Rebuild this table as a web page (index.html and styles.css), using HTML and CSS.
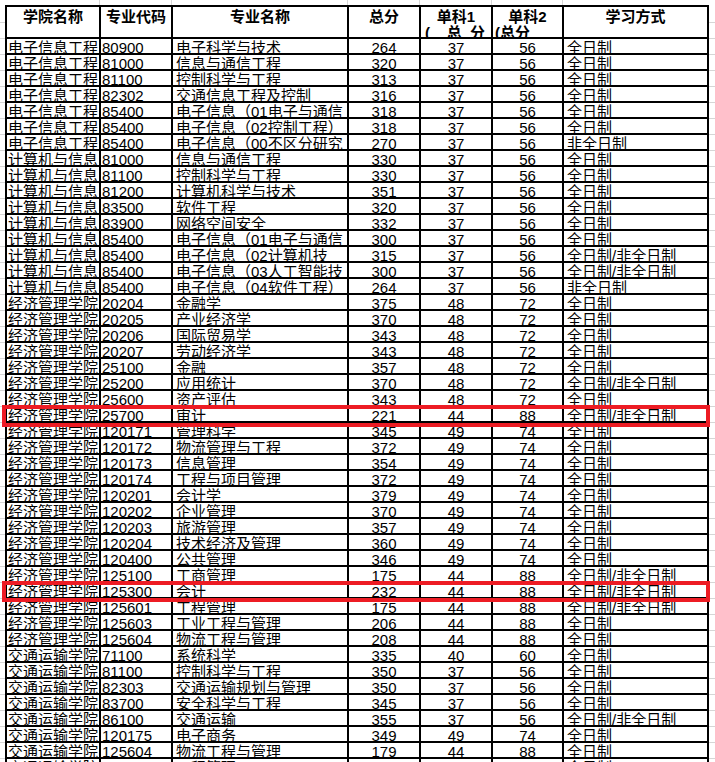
FILE: index.html
```html
<!DOCTYPE html>
<html lang="zh-CN">
<head>
<meta charset="utf-8">
<title>录取分数线</title>
<link rel="stylesheet" href="styles.css">
</head>
<body>
<div class="page">
  <div class="sheet">
    <div class="row head">
      <div class="c">学院名称</div>
      <div class="c">专业代码</div>
      <div class="c">专业名称</div>
      <div class="c">总分</div>
      <div class="c"><div>单科1</div><div class="l2 a">(&nbsp;&nbsp;&nbsp;&nbsp;总&nbsp;&nbsp;分</div></div>
      <div class="c"><div>单科2</div><div class="l2 b">(总分</div></div>
      <div class="c">学习方式</div>
    </div>
    <div class="row"><div class="c">电子信息工程</div><div class="c">80900</div><div class="c">电子科学与技术</div><div class="c">264</div><div class="c">37</div><div class="c">56</div><div class="c">全日制</div></div>
    <div class="row"><div class="c">电子信息工程</div><div class="c">81000</div><div class="c">信息与通信工程</div><div class="c">320</div><div class="c">37</div><div class="c">56</div><div class="c">全日制</div></div>
    <div class="row"><div class="c">电子信息工程</div><div class="c">81100</div><div class="c">控制科学与工程</div><div class="c">313</div><div class="c">37</div><div class="c">56</div><div class="c">全日制</div></div>
    <div class="row"><div class="c">电子信息工程</div><div class="c">82302</div><div class="c">交通信息工程及控制</div><div class="c">316</div><div class="c">37</div><div class="c">56</div><div class="c">全日制</div></div>
    <div class="row"><div class="c">电子信息工程</div><div class="c">85400</div><div class="c">电子信息（01电子与通信</div><div class="c">318</div><div class="c">37</div><div class="c">56</div><div class="c">全日制</div></div>
    <div class="row"><div class="c">电子信息工程</div><div class="c">85400</div><div class="c">电子信息（02控制工程）</div><div class="c">318</div><div class="c">37</div><div class="c">56</div><div class="c">全日制</div></div>
    <div class="row"><div class="c">电子信息工程</div><div class="c">85400</div><div class="c">电子信息（00不区分研究</div><div class="c">270</div><div class="c">37</div><div class="c">56</div><div class="c">非全日制</div></div>
    <div class="row"><div class="c">计算机与信息</div><div class="c">81000</div><div class="c">信息与通信工程</div><div class="c">330</div><div class="c">37</div><div class="c">56</div><div class="c">全日制</div></div>
    <div class="row"><div class="c">计算机与信息</div><div class="c">81100</div><div class="c">控制科学与工程</div><div class="c">330</div><div class="c">37</div><div class="c">56</div><div class="c">全日制</div></div>
    <div class="row"><div class="c">计算机与信息</div><div class="c">81200</div><div class="c">计算机科学与技术</div><div class="c">351</div><div class="c">37</div><div class="c">56</div><div class="c">全日制</div></div>
    <div class="row"><div class="c">计算机与信息</div><div class="c">83500</div><div class="c">软件工程</div><div class="c">320</div><div class="c">37</div><div class="c">56</div><div class="c">全日制</div></div>
    <div class="row"><div class="c">计算机与信息</div><div class="c">83900</div><div class="c">网络空间安全</div><div class="c">332</div><div class="c">37</div><div class="c">56</div><div class="c">全日制</div></div>
    <div class="row"><div class="c">计算机与信息</div><div class="c">85400</div><div class="c">电子信息（01电子与通信</div><div class="c">300</div><div class="c">37</div><div class="c">56</div><div class="c">全日制</div></div>
    <div class="row"><div class="c">计算机与信息</div><div class="c">85400</div><div class="c">电子信息（02计算机技</div><div class="c">315</div><div class="c">37</div><div class="c">56</div><div class="c">全日制/非全日制</div></div>
    <div class="row"><div class="c">计算机与信息</div><div class="c">85400</div><div class="c">电子信息（03人工智能技</div><div class="c">300</div><div class="c">37</div><div class="c">56</div><div class="c">全日制/非全日制</div></div>
    <div class="row"><div class="c">计算机与信息</div><div class="c">85400</div><div class="c">电子信息（04软件工程）</div><div class="c">264</div><div class="c">37</div><div class="c">56</div><div class="c">非全日制</div></div>
    <div class="row"><div class="c">经济管理学院</div><div class="c">20204</div><div class="c">金融学</div><div class="c">375</div><div class="c">48</div><div class="c">72</div><div class="c">全日制</div></div>
    <div class="row"><div class="c">经济管理学院</div><div class="c">20205</div><div class="c">产业经济学</div><div class="c">370</div><div class="c">48</div><div class="c">72</div><div class="c">全日制</div></div>
    <div class="row"><div class="c">经济管理学院</div><div class="c">20206</div><div class="c">国际贸易学</div><div class="c">343</div><div class="c">48</div><div class="c">72</div><div class="c">全日制</div></div>
    <div class="row"><div class="c">经济管理学院</div><div class="c">20207</div><div class="c">劳动经济学</div><div class="c">343</div><div class="c">48</div><div class="c">72</div><div class="c">全日制</div></div>
    <div class="row"><div class="c">经济管理学院</div><div class="c">25100</div><div class="c">金融</div><div class="c">357</div><div class="c">48</div><div class="c">72</div><div class="c">全日制</div></div>
    <div class="row"><div class="c">经济管理学院</div><div class="c">25200</div><div class="c">应用统计</div><div class="c">370</div><div class="c">48</div><div class="c">72</div><div class="c">全日制/非全日制</div></div>
    <div class="row"><div class="c">经济管理学院</div><div class="c">25600</div><div class="c">资产评估</div><div class="c">343</div><div class="c">48</div><div class="c">72</div><div class="c">全日制</div></div>
    <div class="row"><div class="c">经济管理学院</div><div class="c">25700</div><div class="c">审计</div><div class="c">221</div><div class="c">44</div><div class="c">88</div><div class="c">全日制/非全日制</div></div>
    <div class="row"><div class="c">经济管理学院</div><div class="c">120171</div><div class="c">管理科学</div><div class="c">345</div><div class="c">49</div><div class="c">74</div><div class="c">全日制</div></div>
    <div class="row"><div class="c">经济管理学院</div><div class="c">120172</div><div class="c">物流管理与工程</div><div class="c">372</div><div class="c">49</div><div class="c">74</div><div class="c">全日制</div></div>
    <div class="row"><div class="c">经济管理学院</div><div class="c">120173</div><div class="c">信息管理</div><div class="c">354</div><div class="c">49</div><div class="c">74</div><div class="c">全日制</div></div>
    <div class="row"><div class="c">经济管理学院</div><div class="c">120174</div><div class="c">工程与项目管理</div><div class="c">372</div><div class="c">49</div><div class="c">74</div><div class="c">全日制</div></div>
    <div class="row"><div class="c">经济管理学院</div><div class="c">120201</div><div class="c">会计学</div><div class="c">379</div><div class="c">49</div><div class="c">74</div><div class="c">全日制</div></div>
    <div class="row"><div class="c">经济管理学院</div><div class="c">120202</div><div class="c">企业管理</div><div class="c">370</div><div class="c">49</div><div class="c">74</div><div class="c">全日制</div></div>
    <div class="row"><div class="c">经济管理学院</div><div class="c">120203</div><div class="c">旅游管理</div><div class="c">357</div><div class="c">49</div><div class="c">74</div><div class="c">全日制</div></div>
    <div class="row"><div class="c">经济管理学院</div><div class="c">120204</div><div class="c">技术经济及管理</div><div class="c">360</div><div class="c">49</div><div class="c">74</div><div class="c">全日制</div></div>
    <div class="row"><div class="c">经济管理学院</div><div class="c">120400</div><div class="c">公共管理</div><div class="c">346</div><div class="c">49</div><div class="c">74</div><div class="c">全日制</div></div>
    <div class="row"><div class="c">经济管理学院</div><div class="c">125100</div><div class="c">工商管理</div><div class="c">175</div><div class="c">44</div><div class="c">88</div><div class="c">全日制/非全日制</div></div>
    <div class="row"><div class="c">经济管理学院</div><div class="c">125300</div><div class="c">会计</div><div class="c">232</div><div class="c">44</div><div class="c">88</div><div class="c">全日制/非全日制</div></div>
    <div class="row"><div class="c">经济管理学院</div><div class="c">125601</div><div class="c">工程管理</div><div class="c">175</div><div class="c">44</div><div class="c">88</div><div class="c">全日制/非全日制</div></div>
    <div class="row"><div class="c">经济管理学院</div><div class="c">125603</div><div class="c">工业工程与管理</div><div class="c">206</div><div class="c">44</div><div class="c">88</div><div class="c">全日制</div></div>
    <div class="row"><div class="c">经济管理学院</div><div class="c">125604</div><div class="c">物流工程与管理</div><div class="c">208</div><div class="c">44</div><div class="c">88</div><div class="c">全日制</div></div>
    <div class="row"><div class="c">交通运输学院</div><div class="c">71100</div><div class="c">系统科学</div><div class="c">335</div><div class="c">40</div><div class="c">60</div><div class="c">全日制</div></div>
    <div class="row"><div class="c">交通运输学院</div><div class="c">81100</div><div class="c">控制科学与工程</div><div class="c">350</div><div class="c">37</div><div class="c">56</div><div class="c">全日制</div></div>
    <div class="row"><div class="c">交通运输学院</div><div class="c">82303</div><div class="c">交通运输规划与管理</div><div class="c">350</div><div class="c">37</div><div class="c">56</div><div class="c">全日制</div></div>
    <div class="row"><div class="c">交通运输学院</div><div class="c">83700</div><div class="c">安全科学与工程</div><div class="c">345</div><div class="c">37</div><div class="c">56</div><div class="c">全日制</div></div>
    <div class="row"><div class="c">交通运输学院</div><div class="c">86100</div><div class="c">交通运输</div><div class="c">355</div><div class="c">37</div><div class="c">56</div><div class="c">全日制/非全日制</div></div>
    <div class="row"><div class="c">交通运输学院</div><div class="c">120175</div><div class="c">电子商务</div><div class="c">349</div><div class="c">49</div><div class="c">74</div><div class="c">全日制</div></div>
    <div class="row"><div class="c">交通运输学院</div><div class="c">125604</div><div class="c">物流工程与管理</div><div class="c">179</div><div class="c">44</div><div class="c">88</div><div class="c">全日制</div></div>
    <div class="row"><div class="c">交通运输学院</div><div class="c">125601</div><div class="c">工程管理</div><div class="c">175</div><div class="c">44</div><div class="c">88</div><div class="c">全日制</div></div>
  </div>
  <div class="mark mark-a"></div>
  <div class="mark mark-b"></div>
</div>
</body>
</html>
```

FILE: styles.css
```css
html, body {
  margin: 0;
  padding: 0;
  overflow: hidden;
  background: #fff;
}

.page {
  position: relative;
  width: 715px;
  height: 762px;
  overflow: hidden;
  box-sizing: border-box;
  padding: 5px 0 0 5px;
  background-color: #fff;
  background-image:
    linear-gradient(to right,
      transparent 0 99px, #d6d6d6 99px 100px,
      transparent 100px 171px, #d6d6d6 171px 172px,
      transparent 172px 347px, #d6d6d6 347px 348px,
      transparent 348px 419px, #d6d6d6 419px 420px,
      transparent 420px 491px, #d6d6d6 491px 492px,
      transparent 492px 562px, #d6d6d6 562px 563px,
      transparent 563px 100%),
    repeating-linear-gradient(to bottom,
      transparent 0 15px, #d6d6d6 15px 16px);
  background-size: 100% 5px, 100% 100%;
  background-position: 0 0, 0 7px;
  background-repeat: no-repeat, repeat;
  font-family: "Liberation Sans", "Noto Sans CJK SC", sans-serif;
  font-size: 15px;
  color: #000;
}

.sheet {
  display: flex;
  flex-direction: column;
  gap: 2px;
  padding: 2px;
  width: max-content;
  background: #000;
}

.row {
  display: grid;
  grid-template-columns: 92px 70px 174px 70px 70px 69px 143px;
  column-gap: 2px;
  height: 14px;
}

.c {
  background: #fff;
  overflow: hidden;
  white-space: nowrap;
  line-height: 18px;
  padding-left: 1px;
}

.row > .c:nth-child(2) { padding-left: 1px; }
.row > .c:nth-child(3) { padding-left: 3px; }
.row > .c:nth-child(4),
.row > .c:nth-child(5),
.row > .c:nth-child(6) { text-align: center; padding-left: 0; }
.row > .c:nth-child(7) { padding-left: 3px; }

.row.head { height: 30px; }
.row.head > .c {
  font-weight: bold;
  text-align: center;
  line-height: 16px;
  padding: 2px 0 0 0;
}
.row.head .l2 { text-align: left; }
.row.head .l2.a { padding-left: 4px; }
.row.head .l2.b { padding-left: 2px; }

.mark {
  position: absolute;
  left: 2px;
  width: 708px;
  box-sizing: border-box;
  border: 4px solid #ed1c24;
}
.mark-a { top: 405px; height: 22px; }
.mark-b { top: 581px; height: 21px; }
```
